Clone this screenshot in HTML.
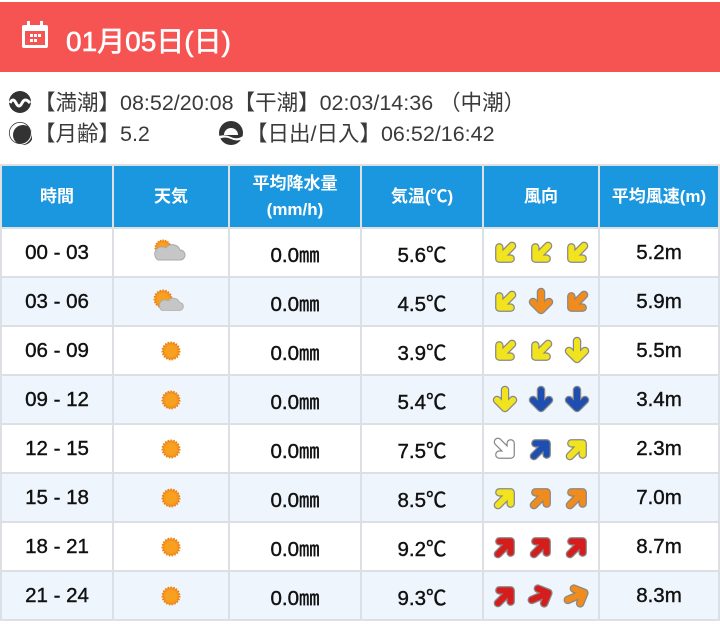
<!DOCTYPE html>
<html><head><meta charset="utf-8"><style>
body{margin:0;width:720px;height:624px;background:#fff;font-family:"Liberation Sans","Noto Sans CJK JP",sans-serif;overflow:hidden;position:relative}
.hdr{position:absolute;left:0;top:2px;width:720px;height:70px;background:#f65353;color:#fff;font-size:28px;-webkit-text-stroke:0.6px #fff}
.hdr span{position:absolute;left:66px;top:18px}
.info{position:absolute;left:8px;font-size:21.5px;color:#3a3a3a;white-space:nowrap}
.info .ic{display:inline-block;vertical-align:middle;margin-right:2px;position:relative;top:-2px}
table{position:absolute;left:0;top:164px;border-collapse:collapse;width:720px;table-layout:fixed}
td,th{border:2px solid #dcdfe3;text-align:center;padding:0;font-size:20.5px;color:#111;-webkit-text-stroke:0.4px #111}
th{background:#1b97df;color:#fff;height:61px;font-size:17px;font-weight:bold;line-height:26px;-webkit-text-stroke:0}
td{height:47px}
tr:nth-child(odd) td{background:#eef5fc}
td svg{vertical-align:middle}
</style></head><body>
<div class="hdr">
<svg style="position:absolute;left:20px;top:18px" width="30" height="30" viewBox="0 0 30 30"><rect x="2" y="5" width="26" height="23" rx="2" fill="#fff"/><rect x="7" y="1" width="3" height="7" fill="#fff"/><rect x="20" y="1" width="3" height="7" fill="#fff"/><rect x="5" y="11" width="20" height="14" fill="#f65353"/><g fill="#fff"><rect x="10" y="14" width="3" height="3"/><rect x="14" y="14" width="3" height="3"/><rect x="18" y="14" width="3" height="3"/><rect x="10" y="19" width="3" height="3"/><rect x="14" y="19" width="3" height="3"/></g></svg>
<span>01月05日(日)</span></div>
<div class="info" style="top:86px"><svg class="ic" width="24" height="24" viewBox="0 0 24 24"><circle cx="12" cy="12" r="11" fill="#333"/><path d="M2 13 q3-6 6 0 t6 0 t8 0" stroke="#fff" stroke-width="3" fill="none"/></svg>【満潮】08:52/20:08【干潮】02:03/14:36 （中潮）</div>
<div class="info" style="top:117px"><svg class="ic" width="24" height="24" viewBox="0 0 24 24"><circle cx="12" cy="12" r="11" fill="#fff" stroke="#333" stroke-width="1.5"/><circle cx="15" cy="14" r="10" fill="#333"/><circle cx="12" cy="12" r="11.5" fill="none" stroke="#fff" stroke-width="1"/></svg>【月齢】5.2<span style="position:absolute;left:210px"><svg class="ic" width="26" height="26" viewBox="0 0 26 26"><circle cx="13" cy="13" r="12" fill="#333"/><path d="M6 15 a7 7 0 0 1 14 0z" fill="#fff"/><path d="M1 16 q6-2 12 1 q6 3 12-1 v3 q-6 3-12 0 q-6-3-12 0z" fill="#fff"/></svg>【日出/日入】06:52/16:42</span></div>
<svg width="0" height="0" style="position:absolute"><defs>
<g id="ar"><path d="M0-10V8M-8 0L0 8L8 0" stroke="#888" stroke-width="8.5" fill="none" stroke-linecap="round" stroke-linejoin="round"/><path d="M0-10V8M-8 0L0 8L8 0" stroke-width="6" fill="none" stroke-linecap="round" stroke-linejoin="round"/></g>
<g id="sun"><circle r="8.5" fill="#f6961e" stroke="#e9801a" stroke-width="2" stroke-dasharray="1.5 1.3"/><circle r="6" fill="#f8a020"/></g>
<g id="cl"><path d="M-9 8 h22 a5 5 0 0 0 0-10 a8 8 0 0 0-14-2 a6 6 0 0 0-8 12z" fill="#c6c6c6" stroke="#a8a8a8"/></g>
</defs></svg>
<table>
<colgroup><col style="width:112px"><col style="width:116px"><col style="width:132px"><col style="width:122px"><col style="width:116px"><col></colgroup>
<tr><th>時間</th><th>天気</th><th>平均降水量<br>(mm/h)</th><th>気温(℃)</th><th>風向</th><th>平均風速(m)</th></tr>
<tr><td>00 - 03</td><td><svg width="40" height="30" viewBox="-16 -14 40 30"><use href="#sun" transform="translate(-4,-4) scale(.9)"/><use href="#cl"/></svg></td><td>0.0㎜</td><td>5.6℃</td><td><svg width="110" height="36" viewBox="0 0 110 36"><use href="#ar" transform="translate(19,18) rotate(45)" stroke="#f1e31e"/><use href="#ar" transform="translate(55,18) rotate(45)" stroke="#f1e31e"/><use href="#ar" transform="translate(91,18) rotate(45)" stroke="#f1e31e"/></svg></td><td>5.2m</td></tr>
<tr><td>03 - 06</td><td><svg width="40" height="30" viewBox="-16 -14 40 30"><use href="#sun" transform="translate(-4,-2)"/><use href="#cl" transform="translate(2,3) scale(.8)"/></svg></td><td>0.0㎜</td><td>4.5℃</td><td><svg width="110" height="36" viewBox="0 0 110 36"><use href="#ar" transform="translate(19,18) rotate(45)" stroke="#f1e31e"/><use href="#ar" transform="translate(55,18)" stroke="#f08c1e"/><use href="#ar" transform="translate(91,18) rotate(45)" stroke="#f08c1e"/></svg></td><td>5.9m</td></tr>
<tr><td>06 - 09</td><td><svg width="30" height="30" viewBox="-15 -15 30 30"><use href="#sun"/></svg></td><td>0.0㎜</td><td>3.9℃</td><td><svg width="110" height="36" viewBox="0 0 110 36"><use href="#ar" transform="translate(19,18) rotate(45)" stroke="#f1e31e"/><use href="#ar" transform="translate(55,18) rotate(45)" stroke="#f1e31e"/><use href="#ar" transform="translate(91,18)" stroke="#f1e31e"/></svg></td><td>5.5m</td></tr>
<tr><td>09 - 12</td><td><svg width="30" height="30" viewBox="-15 -15 30 30"><use href="#sun"/></svg></td><td>0.0㎜</td><td>5.4℃</td><td><svg width="110" height="36" viewBox="0 0 110 36"><use href="#ar" transform="translate(19,18)" stroke="#f1e31e"/><use href="#ar" transform="translate(55,18)" stroke="#1e4fb0"/><use href="#ar" transform="translate(91,18)" stroke="#1e4fb0"/></svg></td><td>3.4m</td></tr>
<tr><td>12 - 15</td><td><svg width="30" height="30" viewBox="-15 -15 30 30"><use href="#sun"/></svg></td><td>0.0㎜</td><td>7.5℃</td><td><svg width="110" height="36" viewBox="0 0 110 36"><use href="#ar" transform="translate(19,18) rotate(-45)" stroke="#fff"/><use href="#ar" transform="translate(55,18) rotate(225)" stroke="#1e4fb0"/><use href="#ar" transform="translate(91,18) rotate(225)" stroke="#f1e31e"/></svg></td><td>2.3m</td></tr>
<tr><td>15 - 18</td><td><svg width="30" height="30" viewBox="-15 -15 30 30"><use href="#sun"/></svg></td><td>0.0㎜</td><td>8.5℃</td><td><svg width="110" height="36" viewBox="0 0 110 36"><use href="#ar" transform="translate(19,18) rotate(225)" stroke="#f1e31e"/><use href="#ar" transform="translate(55,18) rotate(225)" stroke="#f08c1e"/><use href="#ar" transform="translate(91,18) rotate(225)" stroke="#f08c1e"/></svg></td><td>7.0m</td></tr>
<tr><td>18 - 21</td><td><svg width="30" height="30" viewBox="-15 -15 30 30"><use href="#sun"/></svg></td><td>0.0㎜</td><td>9.2℃</td><td><svg width="110" height="36" viewBox="0 0 110 36"><use href="#ar" transform="translate(19,18) rotate(225)" stroke="#d61d1d"/><use href="#ar" transform="translate(55,18) rotate(225)" stroke="#d61d1d"/><use href="#ar" transform="translate(91,18) rotate(225)" stroke="#d61d1d"/></svg></td><td>8.7m</td></tr>
<tr><td>21 - 24</td><td><svg width="30" height="30" viewBox="-15 -15 30 30"><use href="#sun"/></svg></td><td>0.0㎜</td><td>9.3℃</td><td><svg width="110" height="36" viewBox="0 0 110 36"><use href="#ar" transform="translate(19,18) rotate(225)" stroke="#d61d1d"/><use href="#ar" transform="translate(55,18) rotate(247)" stroke="#d61d1d"/><use href="#ar" transform="translate(91,18) rotate(247)" stroke="#f08c1e"/></svg></td><td>8.3m</td></tr>
</table>
</body></html>
